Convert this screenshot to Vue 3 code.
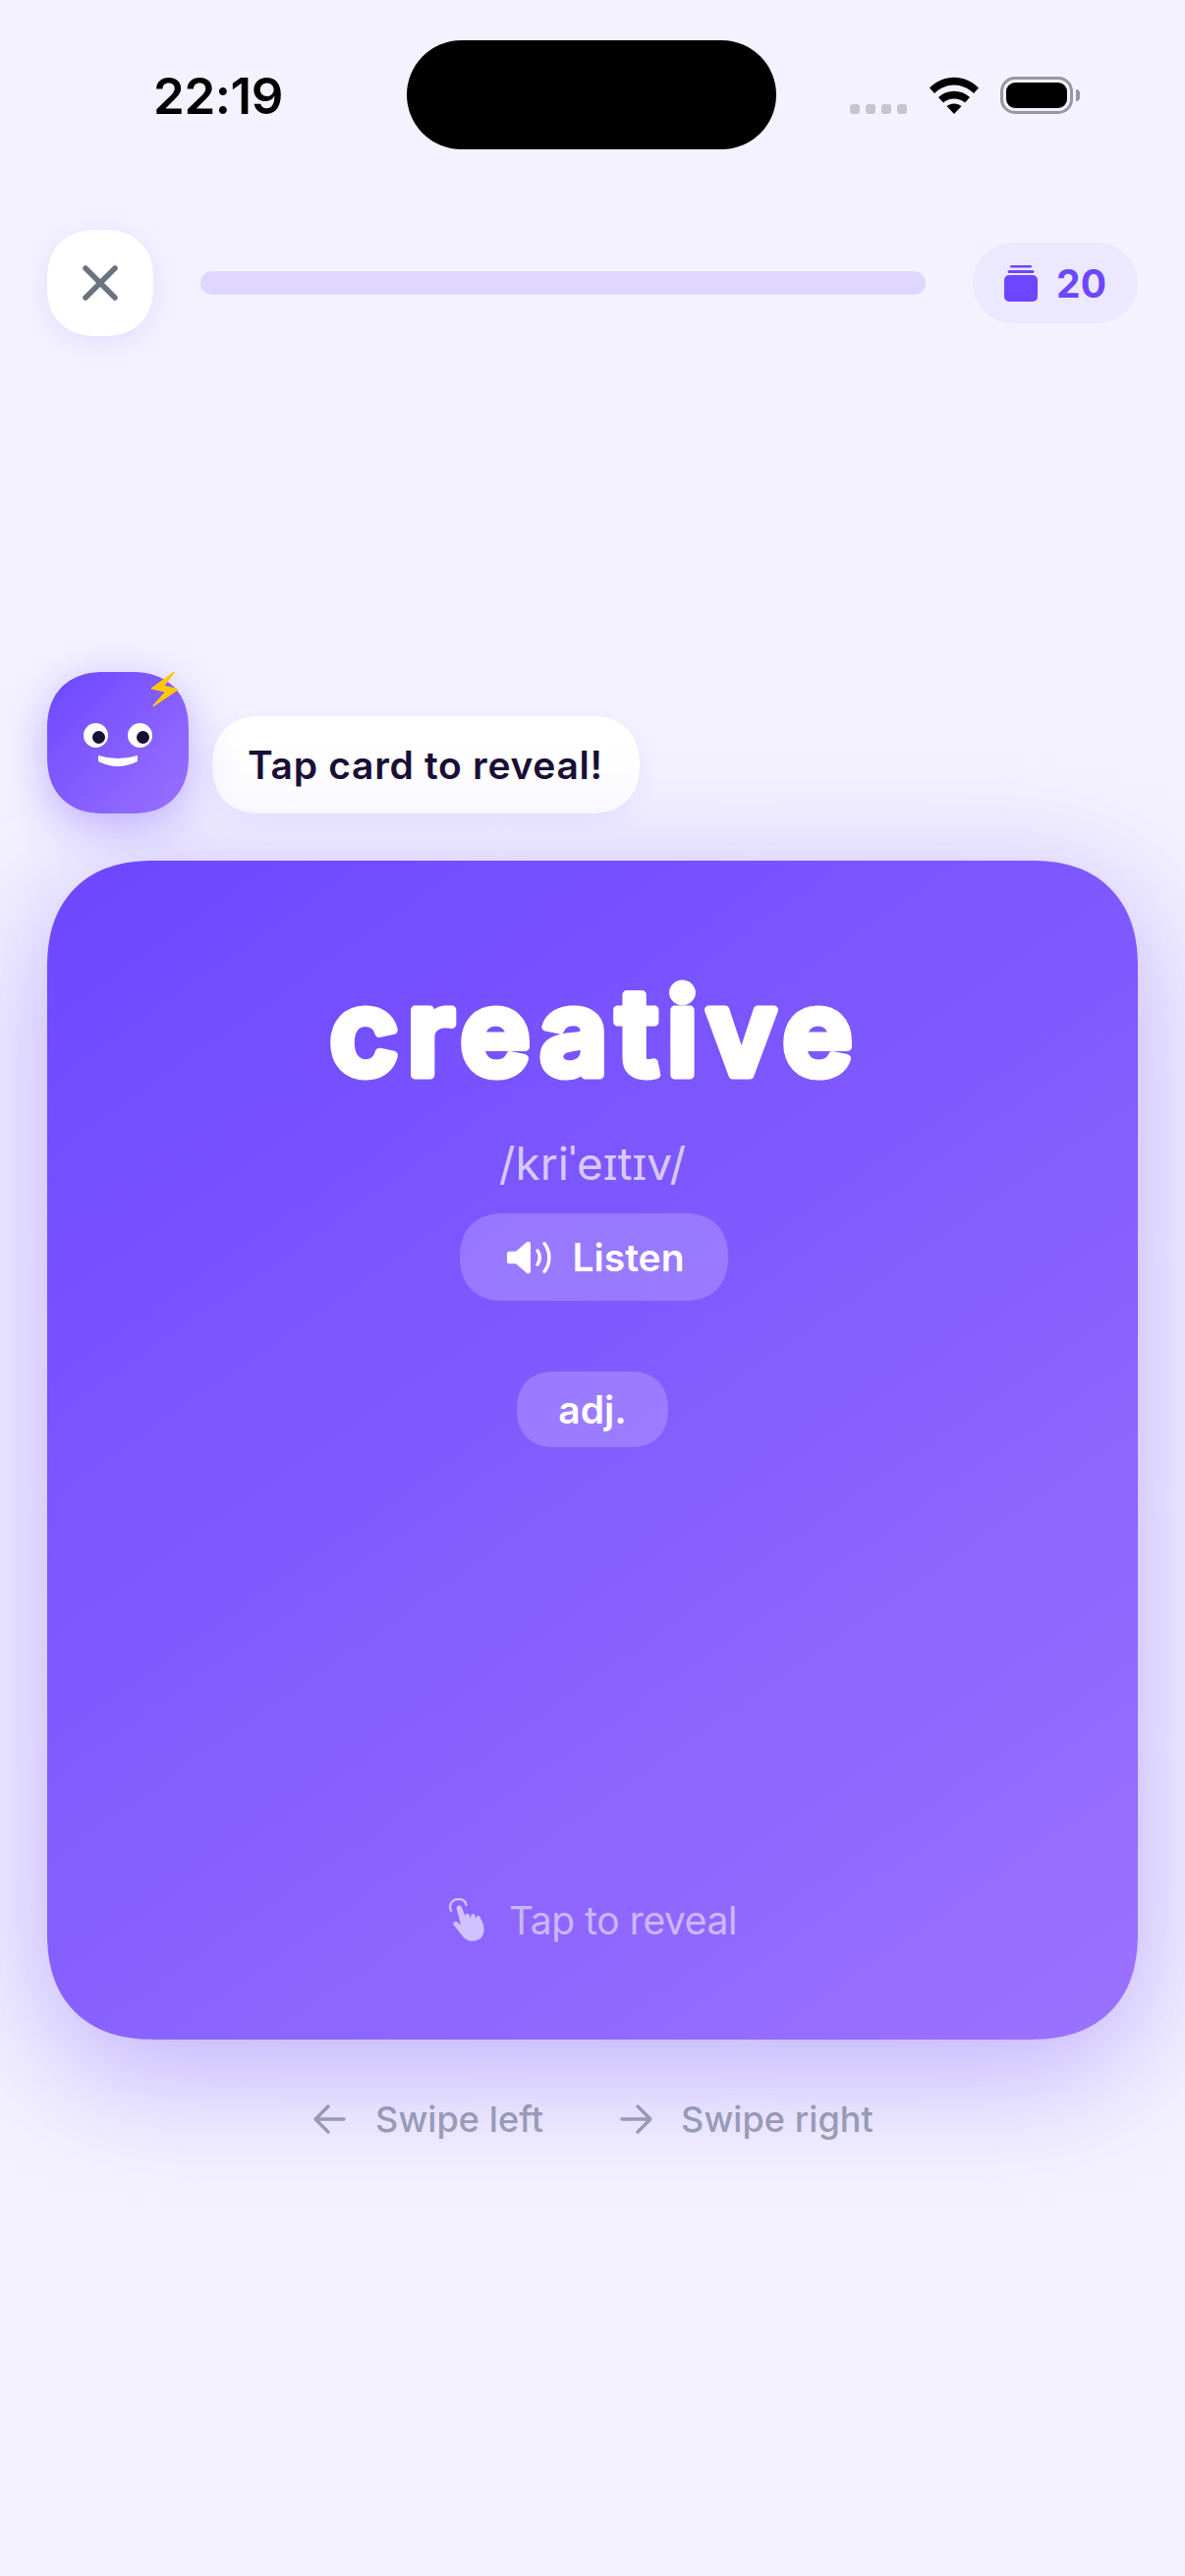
<script setup>
const hints = [
  { label: 'Swipe left', d: 'M32 17H4M16 4L3 17L16 30' },
  { label: 'Swipe right', d: 'M4 17H32M20 4L33 17L20 30' }
]
</script>

<template>
  <div class="page">
    <div class="status">
      <div class="time">22:19</div>
      <div class="island"></div>
      <div class="status-icons">
        <div class="dots"><i></i><i></i><i></i><i></i></div>
        <svg class="wifi" width="50" height="38" viewBox="0 0 50 38">
          <path d="M0 11.500C14 -3 36 -3 50 11.500L45 17C33 5.500 17 5.500 5 17Z" fill="#000"/>
          <path d="M9 21C18 12.500 32 12.500 41 21L36 26.500C30 21 20 21 14 26.500Z" fill="#000"/>
          <path d="M17.500 30C21.500 26.500 28.500 26.500 32.500 30L25 38Z" fill="#000"/>
        </svg>
        <div class="battery"><div class="battery-fill"></div></div>
        <div class="battery-cap"></div>
      </div>
    </div>

    <div class="topbar">
      <div class="close">
        <svg width="36" height="36" viewBox="0 0 36 36"><path d="M3 3L33 33M33 3L3 33" stroke="#6B7280" stroke-width="5.500" stroke-linecap="round"/></svg>
      </div>
      <div class="progress"></div>
      <div class="count">
        <svg width="34" height="37" viewBox="0 0 34 37">
          <rect x="0" y="10" width="34" height="27" rx="5" fill="#6C47FF"/>
          <rect x="3.500" y="5" width="27" height="3" rx="1.500" fill="#6C47FF"/>
          <rect x="6" y="0" width="22" height="2.500" rx="1.250" fill="#6C47FF"/>
        </svg>
        <span>20</span>
      </div>
    </div>

    <div class="coach">
      <div class="mascot">
        <div class="eyes">
          <div class="eye"><div class="pupil"></div></div>
          <div class="eye"><div class="pupil"></div></div>
        </div>
        <svg class="smile" width="40" height="12" viewBox="0 0 40 12"><path d="M0 0Q20 6 40 0V6Q20 16 0 6Z" fill="#fff"/></svg>
        <svg class="bolt" width="27" height="35" viewBox="0 0 27 35"><path d="M23 0.500L0.700 16.700L15 20L2.300 34.300L26.700 17.700L12.300 14.300Z" fill="#FFC800" stroke="#FFC800" stroke-width="1.500" stroke-linejoin="round"/></svg>
      </div>
      <div class="bubble">Tap card to reveal!</div>
    </div>

    <div class="card">
      <svg class="word" width="1110" height="160" viewBox="0 0 1110 160">
        <text x="558" y="127.500" text-anchor="middle">creative</text>
      </svg>
      <div class="phon">/kriˈeɪtɪv/</div>
      <div class="listen">
        <svg width="45" height="34" viewBox="0 0 45 38" preserveAspectRatio="none">
          <path d="M2 12H9L20 1.500C21.500 0.300 24 1 24 3.500V34.500C24 37 21.500 37.700 20 36.500L9 26H2C1 26 0 25 0 24V14C0 13 1 12 2 12Z" fill="#fff"/>
          <path d="M31 11C34 15.500 34 22.500 31 27" fill="none" stroke="#fff" stroke-width="3.500" stroke-linecap="round"/>
          <path d="M38 3C44.500 12 44.500 26 38 35" fill="none" stroke="#fff" stroke-width="3.500" stroke-linecap="round"/>
        </svg>
        <span>Listen</span>
      </div>
      <div class="pos">adj.</div>
      <div class="spacer"></div>
      <div class="tap">
        <svg width="38" height="44" viewBox="0 0 38 44">
          <path d="M3 13C0 6 5 1 10.500 1C15 1 18 3.500 18.500 7" fill="none" stroke="#CFC2FF" stroke-width="2.400" stroke-linecap="round"/>
          <path d="M8.500 10.500C8.500 7 12.800 6.500 14 9.500L17.200 18L18 16.500C18.800 15.200 20.800 15.400 21.500 17L23 20.500L23.600 17C24.300 15.600 26.500 15.800 27.200 17.300L28.600 21L29.300 18.300C30 17.400 31.600 17.600 32.300 19C34.500 23 36.500 26.500 36.500 32C36.500 39.500 31.500 43.800 25 43.800C19.500 43.800 16 41 13 36.500L5.800 27.500C4.200 25 7 22.500 9.300 24.200L13.200 27.500Z" fill="#CFC2FF"/>
        </svg>
        <span>Tap to reveal</span>
      </div>
    </div>

    <div class="hints">
      <div v-for="h in hints" :key="h.label" class="hint">
        <svg width="36" height="34" viewBox="0 0 36 34"><path :d="h.d" fill="none" stroke="#9CA3AF" stroke-width="3.500" stroke-linecap="round" stroke-linejoin="round"/></svg>
        <span>{{ h.label }}</span>
      </div>
    </div>
  </div>
</template>

<style>
html, body { margin: 0; background: #F4F2FF; }
</style>

<style scoped>
.page {
  width: 1206px;
  height: 2622px;
  background: #F4F2FF;
  font-family: Inter, "Noto Sans", sans-serif;
  overflow: hidden;
  box-sizing: border-box;
  padding-top: 41px;
}
.status {
  height: 111px;
  display: grid;
  grid-template-columns: 414px 376px 1fr;
}
.time {
  padding-left: 156px;
  padding-top: 27px;
  font-size: 51px;
  line-height: 60px;
  font-weight: 600;
  color: #000;
  letter-spacing: -0.4px;
}
.island { background: #000; border-radius: 56px; }
.status-icons {
  display: flex;
  align-items: flex-start;
  padding-left: 75px;
  padding-top: 37px;
}
.dots { display: flex; gap: 6px; margin-top: 28px; margin-right: 23px; }
.dots i { width: 10px; height: 10px; border-radius: 3px; background: #C6C4D2; display: block; }
.wifi { margin-right: 22px; }
.battery {
  width: 74px; height: 38px; box-sizing: border-box;
  border: 3px solid #98969F; border-radius: 15px; padding: 3px;
}
.battery-fill { width: 100%; height: 100%; background: #000; border-radius: 9px; }
.battery-cap { width: 4px; height: 12px; background: #98969F; border-radius: 0 5px 5px 0; margin: 13px 0 0 3px; }

.topbar {
  margin-top: 82px;
  padding: 0 48px;
  height: 108px;
  display: flex;
  align-items: center;
}
.close {
  width: 108px; height: 108px;
  background: #fff;
  border-radius: 50px;
  corner-shape: superellipse(1.2);
  box-shadow: 0 6px 30px rgba(108, 71, 255, 0.12);
  display: flex; align-items: center; justify-content: center;
  flex: none;
}
.progress {
  flex: 1;
  height: 24px;
  margin: 0 48px;
  background: #DFD7FF;
  border-radius: 12px;
}
.count {
  flex: none;
  width: 168px; height: 82px;
  box-sizing: border-box;
  background: #ECE8FF;
  border-radius: 41px;
  display: flex; align-items: center; justify-content: center; gap: 19px;
  font-size: 39px; font-weight: 700; color: #6C47FF;
}

.coach {
  margin-top: 342px;
  padding: 0 48px;
  display: flex;
  align-items: flex-end;
  gap: 24px;
}
.mascot {
  width: 144px; height: 144px;
  flex: none;
  border-radius: 58px;
  corner-shape: superellipse(1.2);
  background: linear-gradient(135deg, #6C47FF, #9B72FF);
  box-shadow: 0 12px 48px rgba(108, 71, 255, 0.38);
  position: relative;
  display: flex; flex-direction: column; align-items: center;
}
.eyes { display: flex; gap: 20px; margin-top: 52px; }
.eye {
  width: 25px; height: 25px;
  background: #fff; border-radius: 50%;
  position: relative;
}
.pupil {
  position: absolute;
  left: 9px; top: 8px;
  width: 13px; height: 13px;
  background: #1A1035; border-radius: 50%;
}
.smile { margin-top: 8px; }
.bolt { position: absolute; top: 0; right: 11px; }
.bubble {
  height: 99px;
  box-sizing: border-box;
  padding: 0 37px 0 36px;
  background: #fff;
  border-radius: 49.5px;
  corner-shape: superellipse(1.2);
  display: flex; align-items: center;
  font-size: 39px; font-weight: 570; color: #1A1035;
  letter-spacing: 0.7px;
  box-shadow: 0 6px 24px rgba(108, 71, 255, 0.08);
}

.card {
  position: relative;
  margin: 48px 48px 0;
  height: 1200px;
  box-sizing: border-box;
  padding-top: 90px;
  padding-bottom: 98px;
  border-radius: 108px;
  corner-shape: superellipse(1.2);
  background: linear-gradient(145deg, #6C47FF, #9B72FF);
  box-shadow: 0 30px 130px rgba(108, 71, 255, 0.42);
  display: flex; flex-direction: column; align-items: center;
  color: #fff;
}
.word { display: block; flex: none; }
.word text {
  font-family: Inter, sans-serif;
  font-size: 120px;
  font-weight: 600;
  fill: #fff;
  stroke: #fff;
  stroke-width: 9px;
  stroke-linejoin: round;
  stroke-linecap: round;
  letter-spacing: 9px;
}
.phon {
  margin-top: 28px;
  font-size: 46px;
  line-height: 60px;
  color: rgba(255, 255, 255, 0.7);
}
.listen {
  margin-top: 21px;
  height: 89px;
  width: 273px;
  margin-left: 3px;
  padding-left: 3px;
  box-sizing: border-box;
  background: rgba(255, 255, 255, 0.2);
  border-radius: 44.5px;
  corner-shape: superellipse(1.2);
  display: flex; align-items: center; justify-content: center; gap: 22px;
  font-size: 39px; font-weight: 570;
}
.pos {
  margin-top: 72px;
  height: 77px;
  width: 154px;
  background: rgba(255, 255, 255, 0.2);
  border-radius: 38.5px;
  corner-shape: superellipse(1.2);
  display: flex; align-items: center; justify-content: center;
  font-size: 39px; font-weight: 570;
}
.spacer { flex: 1; }
.tap {
  display: flex; align-items: center; gap: 24px;
  font-size: 39px; color: rgba(255, 255, 255, 0.55);
  height: 48px;
  letter-spacing: -0.4px;
}
.hints {
  margin-top: 57px;
  display: flex; justify-content: center; gap: 76px;
  padding-left: 1px;
}
.hint {
  display: flex; align-items: center; gap: 28px;
  font-size: 36px; color: #9CA3AF; font-weight: 500;
  height: 48px;
  letter-spacing: 0.1px;
}
</style>
